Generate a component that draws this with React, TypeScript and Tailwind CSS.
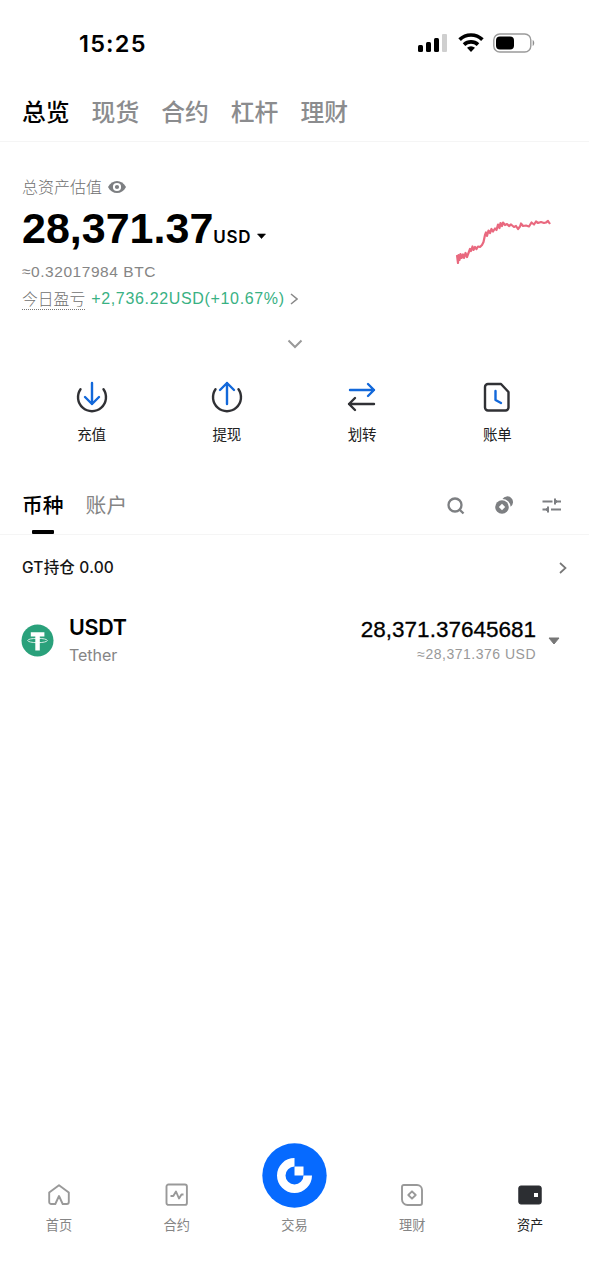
import type { ReactNode } from 'react';

const cjk = "font-['Noto_Sans_CJK_SC',sans-serif]";
const latin = "font-['Liberation_Sans','Noto_Sans_CJK_SC',sans-serif]";
const inter = "font-['Inter','Noto_Sans_CJK_SC',sans-serif]";

function StatusBar() {
  return (
    <div className="flex h-[87px] items-start justify-between pl-[79px] pr-[54px]">
      <span className={`mt-[29px] text-[23.5px] leading-[30px] font-semibold tracking-[1.2px] ${inter}`}>15:25</span>
      <div className="mt-[32px] flex items-start">
        <svg width="30" height="22" viewBox="0 0 30 22">
          <rect x="1" y="13" width="5" height="7" rx="1.5" />
          <rect x="9" y="10" width="5" height="10" rx="1.5" />
          <rect x="17" y="6" width="5" height="14" rx="1.5" />
          <rect x="25" y="2" width="5" height="18" rx="1" fill="#cfcfcf" />
        </svg>
        <svg className="ml-[11px]" width="26" height="22" viewBox="0 0 26 22" fill="none" stroke="#000" strokeWidth="3.7">
          <path d="M1.6 7.6a16.4 16.4 0 0 1 22.8 0" />
          <path d="M6 12.6a10.3 10.3 0 0 1 14 0" />
          <path d="M13 20l-4-4.3a6 6 0 0 1 8 0Z" fill="#000" stroke="none" />
        </svg>
        <svg className="ml-[9px]" width="42" height="22" viewBox="0 0 42 22">
          <rect x="0.8" y="2" width="37" height="18" rx="6" fill="none" stroke="#9b9b9b" strokeWidth="1.4" />
          <rect x="3" y="4.5" width="18" height="13" rx="4" />
          <path d="M39.7 8v6c2-1 2-5 0-6Z" fill="#8e8e8e" />
        </svg>
      </div>
    </div>
  );
}

const topTabs = ['总览', '现货', '合约', '杠杆', '理财'];

function TopTabs() {
  return (
    <nav className={`flex h-[55px] items-start gap-[22px] border-b border-[#f5f5f5] pl-[22px] text-[23.8px] leading-[36px] font-medium ${cjk}`}>
      {topTabs.map((t, i) => (
        <span key={t} className={`mt-[6px] ${i === 0 ? 'text-black' : 'text-[#8b8c8e]'}`}>{t}</span>
      ))}
    </nav>
  );
}

function Summary() {
  return (
    <section className="flex h-[222px] justify-between pl-[22px] pr-[37px]">
      <div>
        <div className={`mt-[32px] flex h-[24px] items-center text-[16px] font-light text-[#707070] ${cjk}`}>
          总资产估值
          <svg className="mt-px ml-[6px]" width="18" height="14" viewBox="0 0 18 14">
            <path d="M0 7C4-1 14-1 18 7 14 15 4 15 0 7Z" fill="#7d7f82" />
            <circle cx="9" cy="7" r="3.1" fill="#7d7f82" stroke="#fff" strokeWidth="2" />
          </svg>
        </div>
        <div className="flex h-[59px] items-baseline">
          <span className={`text-[43px] leading-[61px] font-bold ${latin}`}>28,371.37</span>
          <span className={`text-[17px] font-semibold tracking-[0.7px] ${inter}`}>USD</span>
          <svg className="ml-[6px] self-center translate-y-[8px]" width="9" height="6" viewBox="0 0 9 6">
            <path d="M.5 1h8L4.500 5.500Z" stroke="#000" strokeLinejoin="round" strokeWidth=".6" />
          </svg>
        </div>
        <div className={`h-[28px] text-[15.500px] leading-[29px] tracking-[0.550px] text-[#858585] ${latin}`}>≈0.32017984 BTC</div>
        <div className="flex h-[27px] items-center">
          <span className={`mt-[2px] border-b border-dotted border-[#777] text-[15.800px] leading-[20px] font-light text-[#707070] ${cjk}`}>今日盈亏</span>
          <span className={`ml-[6px] text-[16px] leading-[24px] tracking-[0.660px] text-[#39b183] ${latin}`}>+2,736.22USD(+10.67%)</span>
          <svg className="ml-[5px]" width="8" height="12" viewBox="0 0 8 12" fill="none" stroke="#888" strokeWidth="1.5">
            <path d="m1 1 6 5-6 5" />
          </svg>
        </div>
      </div>
      <svg className="mt-[74px]" width="98" height="50" viewBox="0 0 98 50" fill="none" stroke="#e9697f" strokeWidth="2.200" strokeLinejoin="round">
        <path d="M3 39L4 47L4.500 39L5.500 44L6.500 38L7.500 42L9 38.500L10 42L11.500 37L13 41L14.500 37L16 33L17 35L18.500 30.500L19.500 34L21 31L22.500 33L24 30.500L26 31L28 29L29.500 26L31 19L32 16.500L33 20L34.500 14.500L36 17L37.500 13L39 15.500L41 12.500L42.500 14L44 8.500L45.500 12L46.500 7L48 10L49 6.500L51 9L53 8L55 10L57 8.500L60 11L62 10L64 13L66 10.500L67 7.500L69 10L72 9.500L75 10.500L77.500 6.500L80 8.500L82 5.500L84 7L87 6L90 7L92 6.500L94 5L96 8" />
      </svg>
    </section>
  );
}

const svgLine = { fill: 'none', strokeLinecap: 'round', strokeLinejoin: 'round', strokeWidth: 2.4 } as const;
const ink = '#303135';
const blue = '#1268da';

const actions: { label: string; icon: ReactNode }[] = [
  {
    label: '充值',
    icon: (
      <>
        <path d="M5.500 9.200A14 14 0 1 0 28.500 9.200" stroke={ink} />
        <path d="M17 3v21M10 17l7 7 7-7" stroke={blue} />
      </>
    ),
  },
  {
    label: '提现',
    icon: (
      <>
        <path d="M5.500 9.200A14 14 0 1 0 28.500 9.200" stroke={ink} />
        <path d="M17 24V3M10 10l7-7 7 7" stroke={blue} />
      </>
    ),
  },
  {
    label: '划转',
    icon: (
      <>
        <path d="M5 10h24M23 4l6 6-6 6" stroke={blue} />
        <path d="M29 24H4M10 18l-6 6 6 6" stroke={ink} />
      </>
    ),
  },
  {
    label: '账单',
    icon: (
      <>
        <path d="M8 4H21l7.500 8v15.500a3 3 0 0 1-3 3H8a3 3 0 0 1-3-3V7a3 3 0 0 1 3-3Z" stroke={ink} />
        <path d="M15.500 11v9l5.500 3" stroke={blue} />
      </>
    ),
  },
];

function Actions() {
  return (
    <section className="h-[112px] px-[24px]">
      <div className="grid grid-cols-4">
        {actions.map((a) => (
          <div key={a.label} className="flex flex-col items-center">
            <svg className="mt-[16px]" width="34" height="34" viewBox="0 0 34 34" {...svgLine}>{a.icon}</svg>
            <span className={`mt-[9px] text-[14.5px] leading-[22px] text-[#202020] ${cjk}`}>{a.label}</span>
          </div>
        ))}
      </div>
    </section>
  );
}

function AssetTabs() {
  return (
    <section className="flex h-[59px] justify-between border-b border-[#f5f5f5] pl-[22px] pr-[27px]">
      <div className={`flex gap-[22px] text-[20.8px] leading-[30px] ${cjk}`}>
        <div className="flex h-[59px] flex-col items-center">
          <span className="mt-[13px] font-medium">币种</span>
          <span className="mt-[11px] h-[4px] w-[22px] rounded-[1px] bg-black" />
        </div>
        <span className="mt-[13px] text-[#858585]">账户</span>
      </div>
      <div className="mt-[20px] flex h-[20px]">
        <svg width="20" height="20" viewBox="0 0 20 20" fill="none" stroke="#7d7f82" strokeWidth="2.300">
          <circle cx="8" cy="9" r="6.500" />
          <path d="m12.700 13.700 3.800 3.800" />
        </svg>
        <svg className="ml-[27px]" width="20" height="20" viewBox="0 0 20 20" fill="#7d7f82">
          <path d="M8.500 3A5.700 5.700 0 1 1 16.600 10.700A8.200 8.200 0 0 0 8.500 3Z" />
          <circle cx="8" cy="11" r="6.800" />
          <path d="m8 7.800 3.200 3.200L8 14.200 4.800 11Z" fill="#fff" />
        </svg>
        <svg className="ml-[28px]" width="20" height="20" viewBox="0 0 20 20" fill="none" stroke="#7d7f82" strokeWidth="2">
          <path d="M.5 5.500h10M13 2.500v6M13 5.500H19M9 13.500H19M6 10.500v6M.5 13.500h5.500" />
          <path d="M13 3.500 15.500 5.500l-2.500 2ZM6 11.500 3.500 13.500l2.500 2Z" strokeWidth="1" fill="#7d7f82" />
        </svg>
      </div>
    </section>
  );
}

function Holdings() {
  return (
    <main>
      <div className="flex h-[64px] items-center justify-between pl-[22px] pr-[22px]">
        <span className={`mt-[2px] text-[15.500px] font-medium tracking-[0.200px] text-[#151515] ${inter}`}>GT持仓 0.00</span>
        <svg className="mt-[2px]" width="8" height="12" viewBox="0 0 8 12" fill="none" stroke="#777" strokeWidth="1.7">
          <path d="m1 1 5.500 5L1 11" />
        </svg>
      </div>
      <div className="flex h-[82px] items-center pl-[21px] pr-[29px]">
        <svg width="33" height="33" viewBox="0 0 33 33">
          <circle cx="16.500" cy="16.500" r="16" fill="#2aa17b" />
          <ellipse cx="16.500" cy="16.500" rx="9.800" ry="2.200" fill="none" stroke="#d7eee6" strokeWidth="1" />
          <path d="M9.800 8.300h13.600v4.200h-4.600V26.500h-4.500V12.500H9.800Z" fill="#fff" />
        </svg>
        <div className={`ml-[15px] flex flex-col ${inter}`}>
          <span className="text-[21.500px] leading-[30px] font-semibold tracking-[-0.300px]">USDT</span>
          <span className="text-[16px] leading-[26px] tracking-[-0.050px] text-[#858585]">Tether</span>
        </div>
        <div className={`ml-auto flex flex-col items-end ${latin}`}>
          <span className="mt-px text-[22.500px] leading-[28px] [-webkit-text-stroke:0.300px_#000]">28,371.37645681</span>
          <span className="text-[14px] leading-[21px] tracking-[0.500px] text-[#999]">≈28,371.376 USD</span>
        </div>
        <svg className="mt-px ml-[12px]" width="12" height="8" viewBox="0 0 12 8">
          <path d="M1 1h10L6 7Z" fill="#777" stroke="#777" strokeLinejoin="round" />
        </svg>
      </div>
    </main>
  );
}

const navItems: { label: string; icon: ReactNode }[] = [
  { label: '首页', icon: <path d="M12 2.200 2.200 9.500V19a2 2 0 0 0 2 2H8.300L12 13l3.700 8h4.100a2 2 0 0 0 2-2V9.500Z" /> },
  {
    label: '合约',
    icon: (
      <>
        <rect x="1.500" y="1.500" width="20.400" height="20.400" rx="2" />
        <path d="M5.500 13h2.800l2.700-4.500 3 7 2.500-4H18.500" />
      </>
    ),
  },
  { label: '交易', icon: null },
  {
    label: '理财',
    icon: (
      <>
        <path d="M3.800 2H17a5 5 0 0 1 5 5v13a2 2 0 0 1-2 2H7.500a5.500 5.500 0 0 1-5.500-5.500V3.800A1.800 1.800 0 0 1 3.800 2Z" />
        <path d="m12 8.300 3.700 3.700-3.700 3.700L8.300 12Z" />
      </>
    ),
  },
  {
    label: '资产',
    icon: (
      <>
        <rect x=".800" y="3" width="22.400" height="18" rx="2" fill="#2c2e32" stroke="#2c2e32" strokeWidth="1" />
        <rect x="16" y="10" width="4" height="4" fill="#fff" stroke="none" />
      </>
    ),
  },
];

function BottomNav() {
  return (
    <nav className="mt-auto grid h-[138px] grid-cols-5">
      {navItems.map((n, i) => (
        <div key={n.label} className="flex flex-col items-center">
          {n.icon ? (
            <svg className="mt-[40.500px] mb-[7.500px]" width="24" height="24" viewBox="0 0 24 24" fill="none" stroke="#999" strokeWidth="1.9" strokeLinejoin="round">
              {n.icon}
            </svg>
          ) : (
            <svg className="mt-px mb-[6px]" width="65" height="65" viewBox="0 0 65 65">
              <circle cx="32.500" cy="32.500" r="32.200" fill="#066aff" />
              <path d="M32.500 15a17.500 17.500 0 1 0 17.500 17.500h-8.500a9 9 0 1 1-9-9Z" fill="#fff" />
              <path d="M32.500 23.500h9v9h-9Z" fill="#fff" />
            </svg>
          )}
          <span className={`text-[13.200px] leading-[22px] ${i === 4 ? 'text-[#202020]' : 'text-[#858585]'} ${cjk}`}>{n.label}</span>
        </div>
      ))}
    </nav>
  );
}

export default function App() {
  return (
    <div className="flex h-[1280px] w-[589px] flex-col overflow-hidden bg-white text-black">
      <StatusBar />
      <TopTabs />
      <div className="flex flex-col">
        <Summary />
        <div className="-mt-[25px] flex h-[12px] justify-center">
          <svg width="16" height="10" viewBox="0 0 16 10" fill="none" stroke="#999" strokeWidth="2">
            <path d="m1.500 1.500 6.500 6.500 6.500-6.500" />
          </svg>
        </div>
        <div className="pt-[13px]">
          <Actions />
        </div>
      </div>
      <AssetTabs />
      <Holdings />
      <BottomNav />
    </div>
  );
}
